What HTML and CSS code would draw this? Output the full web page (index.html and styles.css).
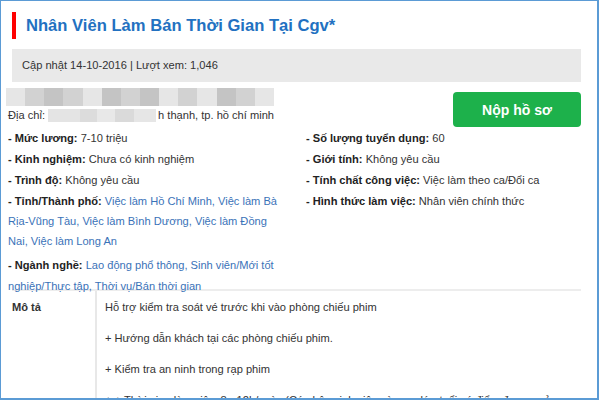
FILE: index.html
```html
<!DOCTYPE html>
<html>
<head>
<meta charset="utf-8">
<link rel="stylesheet" href="styles.css">
</head>
<body>
<div class="frame">
  <div class="title-row">
    <span class="red-bar"></span>
    <h1 class="title">Nhân Viên Làm Bán Thời Gian Tại Cgv*</h1>
  </div>
  <div class="meta">Cập nhật 14-10-2016 | Lượt xem: 1,046</div>
  <div class="top">
    <div class="company">
      <div class="blur">
        <span class="bk b1"></span><span class="bk b2"></span><span class="bk b3"></span><span class="bk b2"></span><span class="bk b1"></span><span class="bk b3"></span><span class="bk b2"></span><span class="bk b3"></span><span class="bk b1"></span><span class="bk b2"></span><span class="bk b1"></span><span class="bk b3"></span><span class="bk b2"></span><span class="bk b1"></span>
      </div>
      <div class="address">Địa chỉ:<span class="addr-blur"></span>h thạnh, tp. hồ chí minh</div>
    </div>
    <a class="apply">Nộp hồ sơ</a>
  </div>
  <div class="cols">
    <div class="col left">
      <p class="item"><b>- Mức lương:</b> 7-10 triệu</p>
      <p class="item"><b>- Kinh nghiệm:</b> Chưa có kinh nghiệm</p>
      <p class="item"><b>- Trình độ:</b> Không yêu cầu</p>
      <p class="item"><b>- Tỉnh/Thành phố:</b> <span class="link">Việc làm Hồ Chí Minh, Việc làm Bà Rịa-Vũng Tàu, Việc làm Bình Dương, Việc làm Đồng Nai, Việc làm Long An</span></p>
      <p class="item gap"><b>- Ngành nghề:</b> <span class="link">Lao động phổ thông, Sinh viên/Mới tốt nghiệp/Thực tập, Thời vụ/Bán thời gian</span></p>
    </div>
    <div class="col right">
      <p class="item"><b>- Số lượng tuyển dụng:</b> 60</p>
      <p class="item"><b>- Giới tính:</b> Không yêu cầu</p>
      <p class="item"><b>- Tính chất công việc:</b> Việc làm theo ca/Đổi ca</p>
      <p class="item"><b>- Hình thức làm việc:</b> Nhân viên chính thức</p>
    </div>
  </div>
  <div class="detail">
    <div class="label">Mô tả</div>
    <div class="content">
      <p>Hỗ trợ kiểm tra soát vé trước khi vào phòng chiếu phim</p>
      <p>+ Hướng dẫn khách tại các phòng chiếu phim.</p>
      <p>+ Kiểm tra an ninh trong rạp phim</p>
      <p>+ + Thời gian làm việc: 8 - 12h/ngày (Cá nhân sinh viên và nam lớn tuổi có điểm được ngủ</p>
    </div>
  </div>
</div>
</body>
</html>
```
FILE: styles.css
```css
* { box-sizing: border-box; }
html, body { margin: 0; padding: 0; background: #fff; }
body {
  font-family: "Liberation Sans", Arial, sans-serif;
  font-size: 11.1px;
  color: #333;
}
.frame {
  width: 599px;
  height: 400px;
  border: 2px solid #5b9bd5;
  border-left-width: 1px;
  border-top-width: 1px;
  overflow: hidden;
  padding: 11px 16px 0 5px;
}
.title-row {
  display: flex;
  align-items: center;
  gap: 10px;
  margin-left: 6px;
  height: 27px;
}
.red-bar {
  width: 4px;
  height: 27px;
  background: #f00;
}
.title {
  margin: 0;
  font-size: 16.6px;
  font-weight: bold;
  color: #2271c1;
  line-height: 27px;
}
.meta {
  margin: 10px 0 0 6px;
  height: 33px;
  background: #e9e9e9;
  padding-left: 10px;
  line-height: 33px;
  font-size: 11.1px;
  color: #333;
}
.top {
  display: flex;
  justify-content: space-between;
  align-items: flex-start;
  margin-top: 6px;
  height: 40px;
}
.company { width: 268px; }
.blur {
  display: flex;
  height: 18px;
}
.bk { flex: 1; height: 18px; }
.b1 { background: #e6e6e6; }
.b2 { background: #d2d2d2; }
.b3 { background: #c4c4c4; }
.address {
  margin-left: 2px;
  line-height: 18px;
  white-space: nowrap;
  display: flex;
  align-items: center;
}
.addr-blur {
  display: inline-block;
  width: 110px;
  height: 13px;
  margin: 0 2px 0 3px;
  background: linear-gradient(90deg, #e4e4e4 0 30%, #dcdcdc 30% 45%, #e8e8e8 45% 62%, #dadada 62% 80%, #e6e6e6 80%);
}
.apply {
  display: flex;
  align-items: center;
  justify-content: center;
  width: 128px;
  height: 35px;
  margin-top: 4px;
  background: #1db14b;
  border-radius: 4px;
  color: #fff;
  font-weight: bold;
  font-size: 14px;
  text-decoration: none;
}
.cols {
  display: flex;
  margin-left: 2px;
  height: 161px;
}
.col.left { width: 298px; padding-right: 20px; }
.col.right { flex: 1; }
.item {
  margin: 0 0 1px 0;
  line-height: 20px;
}
.item.gap { margin-top: 4px; line-height: 20.5px; }
.item b { font-weight: bold; color: #222; }
.link { color: #3a72b8; }
.detail {
  display: flex;
  margin: 0 0 0 6px;
  border-top: 2px solid #ededed;
  height: 200px;
}
.label {
  flex-shrink: 0;
  width: 85px;
  font-weight: bold;
  padding-top: 8px;
  line-height: 16px;
  border-right: 2px solid #e8e8e8;
}
.content {
  min-width: 0;
  padding: 8px 0 0 8px;
  flex: 1;
}
.content p {
  margin: 0 0 15px 0;
  line-height: 16px;
  white-space: nowrap;
}
```
